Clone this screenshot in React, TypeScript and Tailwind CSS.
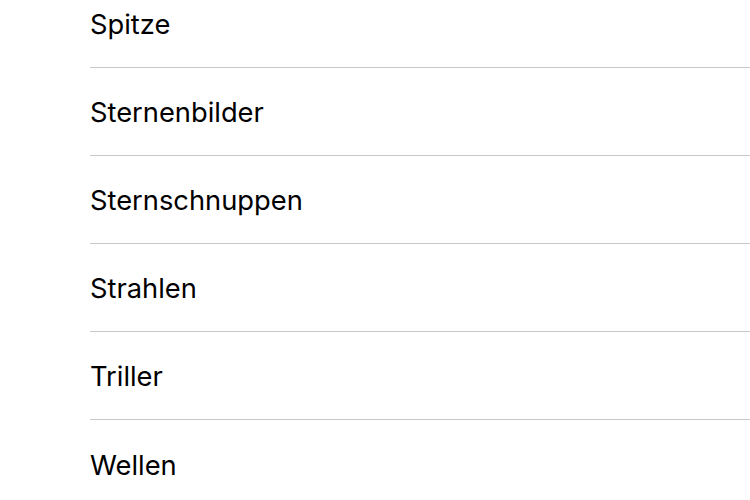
const items = ["Spitze", "Sternenbilder", "Sternschnuppen", "Strahlen", "Triller", "Wellen"];

export default function App() {
  return (
    <div className="h-[500px] w-[750px] overflow-hidden bg-white">
      <ul className="-mt-[20px] pl-[90px]">
        {items.map((item, i) => (
          <li
            key={item}
            className={`flex h-[88px] items-center pt-[4px] text-[27.3px] text-black ${i < items.length - 1 ? "border-b border-[#c8c7cc]" : ""}`}
            style={{ fontFamily: "Inter, 'Noto Sans', sans-serif" }}
          >
            {item}
          </li>
        ))}
      </ul>
    </div>
  );
}
